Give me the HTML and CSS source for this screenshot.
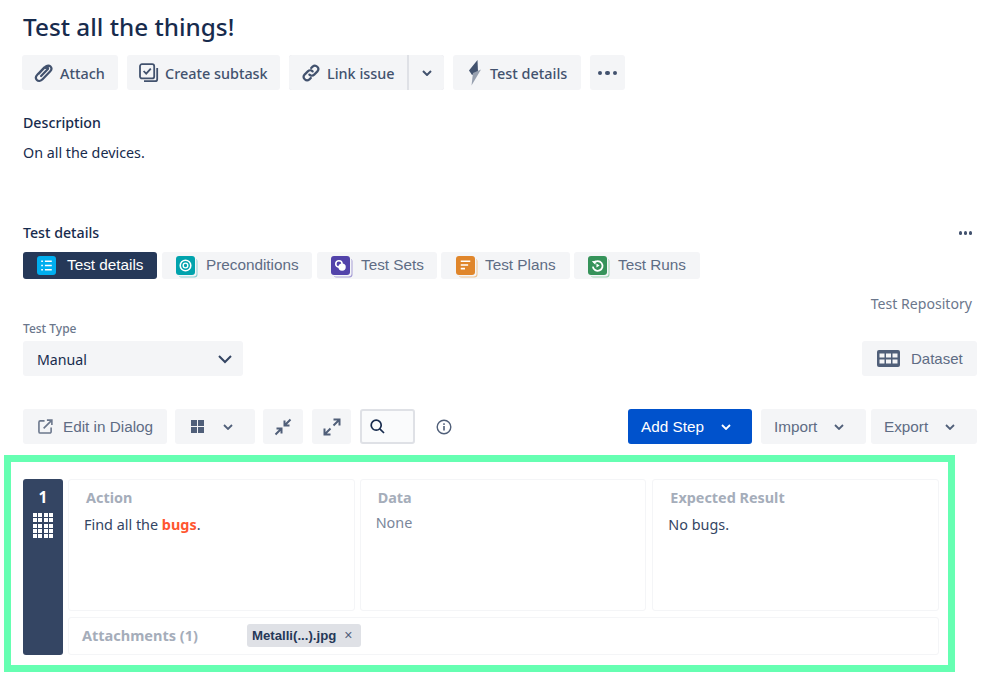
FILE: index.html
```html
<!DOCTYPE html>
<html lang="en">
<head>
<meta charset="utf-8">
<title>Test all the things!</title>
<link rel="stylesheet" href="styles.css">
</head>
<body>
<main class="page">
  <section class="top">
    <h1 class="title">Test all the things!</h1>
    <div class="actions">
      <button class="btn a-attach"><svg class="ico-clip" viewBox="0 0 20 20"><path d="M5.200 10.600l6-6.200c1.500-1.500 3.600-1.500 4.700-.3s1.100 3.100-.4 4.600l-6.800 7c-1.700 1.700-4 1.800-5.200.6s-1-3.300.6-5l6.300-6.400M7.400 12.800l5.700-5.900c.6-.6.7-1.300.3-1.800-.5-.4-1.200-.3-1.800.3" fill="none" stroke="#42526e" stroke-width="2" stroke-linecap="round"/></svg>Attach</button>
      <button class="btn a-sub"><svg class="ico20" viewBox="0 0 20 20"><rect x="1" y="1.200" width="14.200" height="14.200" rx="2" fill="none" stroke="#42526e" stroke-width="1.800"/><path d="M4.600 8l2.600 2.700 4.600-5" fill="none" stroke="#42526e" stroke-width="1.800"/><path d="M18.200 5v11.200a2 2 0 0 1-2 2H5" fill="none" stroke="#42526e" stroke-width="1.800"/></svg>Create subtask</button>
      <div class="split">
        <button class="btn a-link"><svg class="ico20" viewBox="0 0 20 20"><path d="M8.400 11.600a3.400 3.400 0 0 0 4.800 0l3.200-3.200a3.400 3.400 0 0 0-4.800-4.800l-1.400 1.400M11.600 8.400a3.400 3.400 0 0 0-4.800 0l-3.200 3.200a3.400 3.400 0 0 0 4.800 4.800l1.400-1.400" fill="none" stroke="#42526e" stroke-width="2.200" stroke-linecap="round"/></svg>Link issue</button>
        <button class="btn a-caret"><svg class="chev" viewBox="0 0 10 6"><path d="M1 1l4 4 4-4" fill="none" stroke="#42526e" stroke-width="2"/></svg></button>
      </div>
      <button class="btn a-details"><svg class="bolt" viewBox="0 0 14 26"><path d="M9.500 0L1 10.500l3 4.500 6-3z" fill="#42526e"/><path d="M5 13l8-3.500-9.500 16z" fill="#97a0af"/></svg>Test details</button>
      <button class="btn a-more"><span class="dots"><i></i><i></i><i></i></span></button>
    </div>
    <h2 class="label desc-label">Description</h2>
    <p class="desc">On all the devices.</p>

    <div class="section-head">
      <h2 class="label">Test details</h2>
      <span class="dots small"><i></i><i></i><i></i></span>
    </div>

    <nav class="tabs">
      <a class="tab active t1"><span class="tab-ico blue"><svg viewBox="0 0 18 18"><path d="M4 5h1.600M7.500 5H14M4 9h1.600M7.500 9H14M4 13h1.600M7.500 13H14" stroke="#fff" stroke-width="1.600"/></svg></span>Test details</a>
      <a class="tab t2"><span class="tab-ico teal"><svg viewBox="0 0 18 18"><circle cx="9" cy="9" r="5" fill="none" stroke="#fff" stroke-width="1.500"/><circle cx="9" cy="9" r="2.200" fill="none" stroke="#fff" stroke-width="1.300"/></svg></span>Preconditions</a>
      <a class="tab t3"><span class="tab-ico purple"><svg viewBox="0 0 18 18"><circle cx="7.500" cy="7.500" r="3" fill="none" stroke="#fff" stroke-width="1.500"/><circle cx="10.500" cy="10.500" r="3.500" fill="#fff"/></svg></span>Test Sets</a>
      <a class="tab t4"><span class="tab-ico orange"><svg viewBox="0 0 18 18"><path d="M4.500 5h9M4.500 8.500h7M4.500 12h4" stroke="#fff" stroke-width="1.600"/></svg></span>Test Plans</a>
      <a class="tab t5"><span class="tab-ico green"><svg viewBox="0 0 18 18"><path d="M5.500 6.600A4.600 4.600 0 1 1 4.600 10" fill="none" stroke="#fff" stroke-width="1.700"/><path d="M3.600 5l3.800-.6-.4 3.800z" fill="#fff"/><path d="M8 7.200l3 1.800-3 1.800z" fill="#fff"/></svg></span>Test Runs</a>
    </nav>

    <div class="repo"><a>Test Repository</a></div>

    <div class="type-label">Test Type</div>
    <div class="type-row">
      <div class="select">Manual<svg class="chev big" viewBox="0 0 14 9"><path d="M1 1l6 6 6-6" fill="none" stroke="#344563" stroke-width="2"/></svg></div>
      <button class="btn tool dataset"><svg class="grid-ico" viewBox="0 0 23 17"><rect width="23" height="17" rx="2" fill="#505f79"/><g fill="#f4f5f7"><rect x="2.500" y="3.500" width="5" height="4"/><rect x="9" y="3.500" width="5" height="4"/><rect x="15.500" y="3.500" width="5" height="4"/><rect x="2.500" y="9.500" width="5" height="4"/><rect x="9" y="9.500" width="5" height="4"/><rect x="15.500" y="9.500" width="5" height="4"/></g></svg>Dataset</button>
    </div>

    <div class="toolbar">
      <div class="tool-left">
        <button class="btn tool edit"><svg class="ico15" viewBox="0 0 16 16"><path d="M7 2H2.500A1.500 1.500 0 0 0 1 3.500v10A1.500 1.500 0 0 0 2.500 15h10a1.500 1.500 0 0 0 1.500-1.500V9" fill="none" stroke="#6b778c" stroke-width="1.700"/><path d="M6 10l8-8M9.500 1.200h5.300v5.300" fill="none" stroke="#6b778c" stroke-width="1.700"/></svg>Edit in Dialog</button>
        <button class="btn tool layout"><svg class="ico13" viewBox="0 0 13 13"><path d="M0 0h6v6H0zM7 0h6v6H7zM0 7h6v6H0zM7 7h6v6H7z" fill="#505f79"/></svg><svg class="chev" viewBox="0 0 10 6"><path d="M1 1l4 4 4-4" fill="none" stroke="#505f79" stroke-width="1.800"/></svg></button>
        <button class="btn tool sq1"><svg class="ico18" viewBox="0 0 18 18"><path d="M16.500 1.500L11.500 6.500M10.500 2.500v5h5" fill="none" stroke="#505f79" stroke-width="2"/><path d="M1.500 16.500L6.500 11.500M2.500 10.500h5v5" fill="none" stroke="#505f79" stroke-width="2"/></svg></button>
        <button class="btn tool sq2"><svg class="ico18" viewBox="0 0 18 18"><path d="M10.500 7.500L16 2M10.500 1.500h6v6" fill="none" stroke="#505f79" stroke-width="2"/><path d="M7.500 10.500L2 16M1.500 10.500v6h6" fill="none" stroke="#505f79" stroke-width="2"/></svg></button>
        <div class="search"><svg class="ico15" viewBox="0 0 15 15"><circle cx="6.200" cy="6.200" r="5" fill="none" stroke="#172b4d" stroke-width="1.700"/><path d="M9.800 9.800l4.200 4.200" stroke="#172b4d" stroke-width="1.700"/></svg></div>
        <svg class="info" viewBox="0 0 16 16"><circle cx="8" cy="8" r="6.800" fill="none" stroke="#505f79" stroke-width="1.400"/><rect x="7.200" y="7" width="1.600" height="4.500" fill="#505f79"/><rect x="7.200" y="4.300" width="1.600" height="1.600" fill="#505f79"/></svg>
      </div>
      <div class="tool-right">
        <button class="btn tool primary">Add Step<svg class="chev" viewBox="0 0 10 6"><path d="M1 1l4 4 4-4" fill="none" stroke="#fff" stroke-width="1.800"/></svg></button>
        <button class="btn tool import">Import<svg class="chev" viewBox="0 0 10 6"><path d="M1 1l4 4 4-4" fill="none" stroke="#505f79" stroke-width="1.800"/></svg></button>
        <button class="btn tool export">Export<svg class="chev" viewBox="0 0 10 6"><path d="M1 1l4 4 4-4" fill="none" stroke="#505f79" stroke-width="1.800"/></svg></button>
      </div>
    </div>
  </section>

  <section class="highlight">
    <div class="step">
      <div class="step-num">
        <span>1</span>
        <div class="handle"><i></i><i></i><i></i><i></i><i></i><i></i><i></i><i></i><i></i><i></i><i></i><i></i><i></i><i></i><i></i><i></i><i></i><i></i><i></i><i></i></div>
      </div>
      <div class="step-body">
        <div class="cols">
          <div class="card">
            <h3>Action</h3>
            <p>Find all the <strong>bugs</strong>.</p>
          </div>
          <div class="card data">
            <h3>Data</h3>
            <p class="none">None</p>
          </div>
          <div class="card expected">
            <h3>Expected Result</h3>
            <p>No bugs.</p>
          </div>
        </div>
        <div class="attachments">
          <span class="att-label">Attachments (1)</span>
          <span class="chip">Metalli(...).jpg<b>×</b></span>
        </div>
      </div>
    </div>
  </section>
</main>
</body>
</html>
```
FILE: styles.css
```css
* { box-sizing: border-box; }
html, body { margin: 0; padding: 0; background: #fff; }
body { width: 996px; height: 675px; overflow: hidden; font-family: "Noto Sans", sans-serif; color: #172b4d; }
.page { display: flex; flex-direction: column; }
.top { padding: 0 19px 0 23px; }

.title { margin: 0; height: 55px; padding-top: 10px; font-size: 24.300px; line-height: 34px; font-weight: 500; color: #172b4d; }

.btn { display: inline-flex; align-items: center; border: 0; margin: 0; padding: 0; background: #f4f5f7; color: #42526e; border-radius: 3px; font-family: "Noto Sans", sans-serif; font-size: 14.400px; font-weight: 500; height: 35px; flex: none; }

.actions { display: flex; gap: 9px; margin-left: -1px; height: 35px; }
.actions .btn { padding-top: 1px; }
.ico20 { width: 20px; height: 20px; flex: none; }
.ico-clip { width: 22px; height: 22px; flex: none; }
.a-attach { width: 96px; padding-left: 11px; gap: 5px; }
.a-sub { width: 153px; padding-left: 12px; gap: 6px; }
.split { display: flex; gap: 2px; background: #dfe1e6; border-radius: 3px; overflow: hidden; }
.a-link { width: 118px; padding-left: 12px; gap: 6px; border-radius: 0; }
.a-caret { width: 35px; justify-content: center; border-radius: 0; }
.a-details { width: 128px; padding-left: 15px; gap: 8px; }
.bolt { width: 14px; height: 26px; flex: none; }
.a-more { width: 35px; justify-content: center; }
.chev { width: 10px; height: 6px; flex: none; }
.chev.big { width: 14px; height: 9px; }

.dots { display: inline-flex; gap: 3px; }
.dots i { width: 4.500px; height: 4.500px; border-radius: 50%; background: #42526e; }
.dots.small { gap: 1.500px; }
.dots.small i { width: 3.500px; height: 3.500px; }

.label { margin: 0; font-size: 14.200px; line-height: 20px; font-weight: 500; color: #172b4d; }
.desc-label { margin-top: 23px; }
.desc { margin: 10px 0 0; font-size: 14.300px; line-height: 20px; color: #172b4d; }

.section-head { display: flex; justify-content: space-between; align-items: center; margin-top: 60px; padding-right: 5px; }

.tabs { display: flex; gap: 5px; margin-top: 9px; height: 27px; }
.tab { display: flex; align-items: center; height: 27px; padding-bottom: 1px; background: #f4f5f7; color: #5e6c84; border-radius: 3px; font-family: "Liberation Sans", sans-serif; font-size: 15.300px; flex: none; }
.tab.active { background: #253858; color: #fff; }
.t1 { width: 134px; padding-left: 14px; gap: 11px; }
.t2 { width: 150px; padding-left: 14px; gap: 11px; }
.t3 { width: 120px; padding-left: 14px; gap: 11px; }
.t4 { width: 129px; margin-left: -1px; padding-left: 15px; gap: 10px; }
.t5 { width: 126px; margin-left: -1px; padding-left: 14px; gap: 11px; }
.tab-ico { width: 19px; height: 19px; border-radius: 3px; display: block; flex: none; }
.tab-ico svg { display: block; width: 19px; height: 19px; }
.blue { background: #00aeef; }
.teal { background: #00a3ad; box-shadow: 1.500px 1.500px 0 #f4f5f7, 2.500px 2.500px 0 #8dd3d7; }
.purple { background: #5243aa; box-shadow: 1.500px 1.500px 0 #f4f5f7, 2.500px 2.500px 0 #a79fd6; }
.orange { background: #e0862b; box-shadow: 1.500px 1.500px 0 #f4f5f7, 2.500px 2.500px 0 #f0c694; }
.green { background: #36935a; box-shadow: 1.500px 1.500px 0 #f4f5f7, 2.500px 2.500px 0 #a3d5b6; }

.repo { display: flex; justify-content: flex-end; padding-right: 5px; margin-top: 15px; height: 20px; font-size: 14.100px; line-height: 20px; color: #6b778c; }

.type-label { margin-top: 6px; font-size: 12px; line-height: 18px; font-weight: 500; color: #6b778c; }
.type-row { display: flex; justify-content: space-between; margin-top: 3px; height: 35px; }
.select { width: 220px; height: 35px; padding: 1px 11px 0 14px; display: flex; align-items: center; justify-content: space-between; background: #f4f5f7; border-radius: 3px; font-size: 14.200px; color: #172b4d; }
.grid-ico { width: 23px; height: 17px; flex: none; }

.toolbar { display: flex; justify-content: space-between; margin-top: 33px; height: 35px; }
.tool-left, .tool-right { display: flex; align-items: center; }
.tool { font-family: "Liberation Sans", sans-serif; font-weight: 400; font-size: 15.300px; color: #5e6c84; }
.dataset { width: 115px; padding-left: 15px; gap: 11px; font-size: 15px; }
.edit { width: 144px; padding-left: 15px; gap: 10px; margin-right: 8px; }
.ico15 { width: 15px; height: 15px; flex: none; }
.ico13 { width: 13px; height: 13px; flex: none; }
.ico18 { width: 18px; height: 18px; flex: none; }
.layout { width: 80px; padding-left: 16px; gap: 19px; margin-right: 8px; }
.sq1 { width: 40px; justify-content: center; margin-right: 9px; }
.sq2 { width: 39px; justify-content: center; margin-right: 9px; }
.search { width: 55px; height: 35px; padding: 0 0 0 8px; display: flex; align-items: center; background: #fafbfc; border: 2px solid #dfe1e6; border-radius: 3px; margin-right: 21px; }
.info { width: 16px; height: 16px; flex: none; }
.primary { width: 124px; padding-left: 13px; gap: 17px; background: #0052cc; color: #fff; margin-right: 9px; }
.import { width: 105px; padding-left: 13px; gap: 17px; margin-right: 5px; }
.export { width: 106px; padding-left: 13px; gap: 17px; }

.highlight { width: 951px; height: 217px; margin: 11px 0 0 4px; padding: 17px 9px 10px 12px; border: 7px solid #66ffb2; }
.step { display: flex; gap: 5px; height: 176px; }
.step-num { width: 40px; flex: none; background: #344563; border-radius: 3px; color: #fff; display: flex; flex-direction: column; align-items: center; padding-top: 8px; font-size: 15.500px; font-weight: 700; line-height: 20px; }
.handle { display: grid; grid-template-columns: repeat(4, 4px); grid-auto-rows: 4px; gap: 1.333px; margin-top: 6px; }
.handle i { background: #fff; }
.step-body { flex: 1; display: flex; flex-direction: column; gap: 6px; min-width: 0; }
.cols { display: flex; gap: 5px; height: 132px; }
.card { flex: 1; border: 1px solid #f4f5f7; border-radius: 3px; padding: 8px 15px; }
.card.expected { margin-left: 1px; }
.card h3 { margin: 0 0 0 2px; font-size: 14.400px; line-height: 20px; font-weight: 700; color: #a5adba; }
.card p { margin: 7px 0 0; font-size: 14.400px; line-height: 20px; color: #344563; }
.card p strong { color: #ff5630; font-weight: 700; }
.card p.none { color: #7a869a; margin-top: 5px; }
.attachments { display: flex; align-items: center; height: 38px; border: 1px solid #f4f5f7; border-radius: 3px; padding: 0 0 2px 13px; }
.att-label { width: 165px; font-size: 14.500px; line-height: 20px; margin-top: -1px; font-weight: 700; color: #a5adba; flex: none; }
.chip { display: inline-flex; align-items: center; width: 114px; height: 23px; padding-left: 5px; background: #dfe1e6; border-radius: 3px; font-family: "Liberation Sans", sans-serif; font-size: 13.200px; font-weight: 700; color: #253858; }
.chip b { margin-left: 8px; font-size: 14px; font-weight: 400; color: #505f79; }
```
